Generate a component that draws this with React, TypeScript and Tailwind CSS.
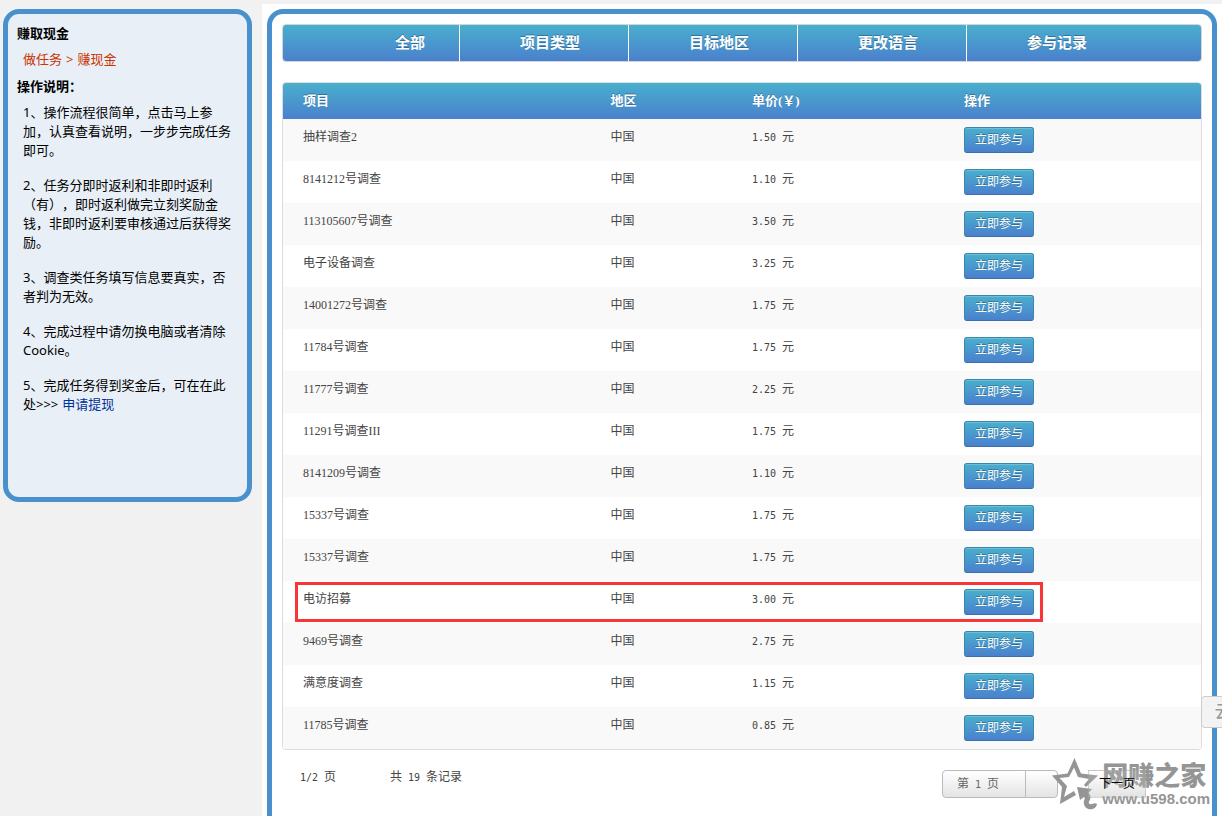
import { clsx } from "clsx";

const NAV_ITEMS = ["项目类型", "目标地区", "更改语言", "参与记录"];

const TASKS = [
  { name: "抽样调查2", price: "1.50" },
  { name: "8141212号调查", price: "1.10" },
  { name: "113105607号调查", price: "3.50" },
  { name: "电子设备调查", price: "3.25" },
  { name: "14001272号调查", price: "1.75" },
  { name: "11784号调查", price: "1.75" },
  { name: "11777号调查", price: "2.25" },
  { name: "11291号调查III", price: "1.75" },
  { name: "8141209号调查", price: "1.10" },
  { name: "15337号调查", price: "1.75" },
  { name: "15337号调查", price: "1.75" },
  { name: "电访招募", price: "3.00", highlighted: true },
  { name: "9469号调查", price: "2.75" },
  { name: "满意度调查", price: "1.15" },
  { name: "11785号调查", price: "0.85" },
];

function Sidebar() {
  return (
    <aside className="mt-[9px] ml-[3px] h-[493px] w-[249px] shrink-0 rounded-2xl border-[5px] border-[#4891cd] bg-[#e8eff6] pt-[10px] pr-[14px] pl-[15px] font-['Noto_Sans','Noto_Sans_CJK_SC',sans-serif] text-[13px] leading-[19px] text-black">
      <h2 className="-ml-[6px] font-bold">赚取现金</h2>
      <p className="mt-[7px] text-[#cc3300]">
        <a href="#tasks">做任务</a>
        <span className="mx-1">&gt;</span>
        <a href="#cash">赚现金</a>
      </p>
      <h3 className="mt-2 -ml-[6px] font-bold">操作说明：</h3>
      <div className="mt-[7px] space-y-4 [text-spacing-trim:space-all]">
        <p>1、操作流程很简单，点击马上参加，认真查看说明，一步步完成任务即可。</p>
        <p>2、任务分即时返利和非即时返利（有），即时返利做完立刻奖励金钱，非即时返利要审核通过后获得奖励。</p>
        <p>3、调查类任务填写信息要真实，否者判为无效。</p>
        <p>4、完成过程中请勿换电脑或者清除Cookie。</p>
        <p>
          5、完成任务得到奖金后，可在在此处&gt;&gt;&gt;
          <a href="#withdraw" className="ml-1 inline-block text-[#003399]">申请提现</a>
        </p>
      </div>
    </aside>
  );
}

function NavBar() {
  return (
    <nav className="flex h-[38px] overflow-hidden rounded border border-[#d5d5d5] bg-linear-to-b from-[#49afcd] to-[#4a80cd] text-[15px] leading-9 font-bold text-white text-shadow-[0_-1px_0_rgb(0_0_0/0.3)]">
      <a href="#all" className="w-[177px] border-r border-white pl-28">全部</a>
      {NAV_ITEMS.map((item, i) => (
        <a
          key={item}
          href={`#nav-${i}`}
          className="w-[169px] border-r border-white pl-[60px] last:border-r-0"
        >
          {item}
        </a>
      ))}
    </nav>
  );
}

function TaskTable() {
  return (
    <div className="mt-5 overflow-hidden rounded border border-[#dddddd]">
      <table className="w-full table-fixed text-left">
        <thead className="bg-linear-to-b from-[#49afcd] to-[#4a80cd] text-[13px] leading-9 text-white text-shadow-[0_-1px_0_rgb(0_0_0/0.3)]">
          <tr>
            <th className="w-[33.5%] pl-5">项目</th>
            <th className="w-[15.4%] pl-5">地区</th>
            <th className="w-[23.1%] pl-5">单价(￥)</th>
            <th className="pl-5">操作</th>
          </tr>
        </thead>
        <tbody>
          {TASKS.map((task, i) => (
            <tr key={i} className="relative align-top leading-5 odd:bg-[#f9f9f9]">
              <td className="pt-2 pl-5">
                {task.name}
                {task.highlighted && (
                  <span className="pointer-events-none absolute top-px left-3 h-10 w-[748px] border-[3px] border-[#f93537]" />
                )}
              </td>
              <td className="pt-2 pl-5">中国</td>
              <td className="pt-2 pl-5">
                <Num>{task.price} </Num>元
              </td>
              <td className="py-2 pl-5">
                <button
                  type="button"
                  className="block h-[26px] w-[70px] rounded-[3px] border border-[#3a87ad] border-b-[#3a6fa8] bg-linear-to-b from-[#49afcd] to-[#4a80cd] text-white inset-shadow-[0_1px_0_rgb(255_255_255/0.2)] text-shadow-[0_-1px_0_rgb(0_0_0/0.3)]"
                >
                  立即参与
                </button>
              </td>
            </tr>
          ))}
        </tbody>
      </table>
    </div>
  );
}

function Num({ children }: { children: React.ReactNode }) {
  return <span className="font-['DejaVu_Sans_Mono',monospace] text-[10px] whitespace-pre">{children}</span>;
}

function Pagination() {
  const segment = "h-7 border border-[#bbbbbb] bg-linear-to-b from-white to-[#e4e4e4]";

  return (
    <div className="mt-5 flex h-7 items-start pr-14 pl-[18px]">
      <span className="w-[90px] leading-[14px]"><Num>1/2 </Num>页</span>
      <span className="leading-[14px]">共<Num> 19 </Num>条记录</span>
      <button type="button" className={clsx(segment, "ml-auto w-[84px] rounded-l pr-3 text-[#666666]")}>
        第<Num> 1 </Num>页
      </button>
      <button type="button" aria-label="选择页码" className={clsx(segment, "-ml-px w-[33px] rounded-r")} />
      <button
        type="button"
        className="relative z-10 ml-[30px] h-7 w-[58px] border border-[#999999]/40 bg-linear-to-b from-white/10 to-[#bbbbbb]/40 text-black"
      >
        下一页
      </button>
    </div>
  );
}

function Watermark() {
  return (
    <div className="pointer-events-none absolute top-[758px] right-3 flex text-[#959595]">
      <svg className="-mr-1" width="54" height="54" viewBox="0 0 54 54">
        <path
          fill="currentColor"
          fillRule="evenodd"
          d="M22.500 0L29 15.500L46 17.500L34 29L32 27L37 21L26 19L22 9.500L17 19L7.500 20L15 28L12 39L22 33L24 37L8 46L10 29L0 17.500L15.500 15.500Z"
        />
        <path
          fill="currentColor"
          d="M25 29L40 31L36.500 35C42 41 34 44 38 46C40 47 42 44 45 46C44 53 33 53 32 46C31 42 34 41 32 39L28 42Z"
        />
      </svg>
      <div className="pt-1">
        <div className="text-[26px] leading-[30px] font-black">网赚之家</div>
        <div className="font-['Liberation_Sans',sans-serif] text-[15px] leading-[14px] font-bold">www.u598.com</div>
      </div>
    </div>
  );
}

export default function App() {
  return (
    <div className="relative flex min-h-screen overflow-hidden bg-[#f1f1f1] font-['Liberation_Serif','Noto_Sans_CJK_SC',sans-serif] text-xs text-[#444444]">
      <Sidebar />
      <main className="mt-1 ml-[10px] flex flex-1 bg-white pt-[5px] pr-[5px] pl-[5px]">
        <div className="flex-1 rounded-t-2xl border-[5px] border-b-0 border-[#4891cd] px-[10px] pt-[10px]">
          <NavBar />
          <TaskTable />
          <Pagination />
        </div>
      </main>
      <button
        type="button"
        className="absolute top-[696px] -right-6 h-8 w-[45px] rounded-l border border-[#cccccc] bg-[#f3f3f3] text-lg text-[#999999]"
      >
        云
      </button>
      <Watermark />
    </div>
  );
}
